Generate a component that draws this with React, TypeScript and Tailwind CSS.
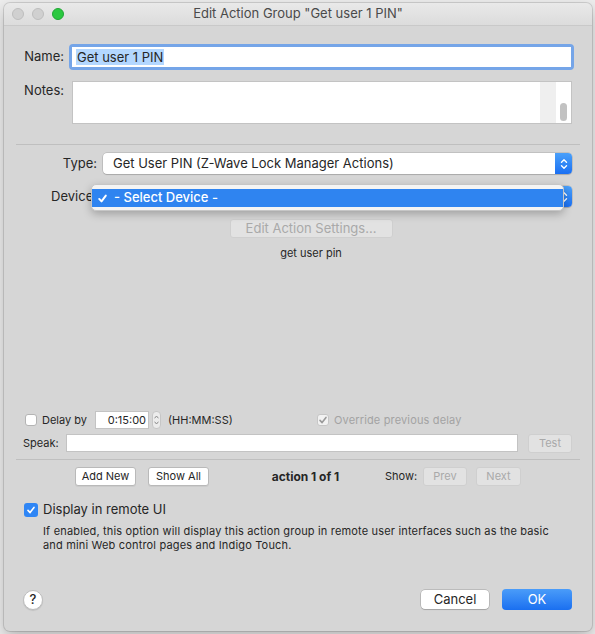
import React from "react";

const font = "font-['Inter','Liberation_Sans',sans-serif]";

function Stepper() {
  // blue up/down arrows on the right side of a popup button
  return (
    <div className="w-[17px] h-full rounded-r-[4px] bg-gradient-to-b from-[#4aa0fa] to-[#1b6ff2] flex items-center justify-center">
      <svg width="8" height="12" viewBox="0 0 8 12" fill="none" stroke="white" strokeWidth="1.4" strokeLinecap="round" strokeLinejoin="round">
        <path d="M1.5 4.2 L4 1.8 L6.5 4.2" />
        <path d="M1.5 7.8 L4 10.2 L6.5 7.8" />
      </svg>
    </div>
  );
}

function Check({ color, size = 10, width = 1.6 }: { color: string; size?: number; width?: number }) {
  return (
    <svg width={size} height={size} viewBox="0 0 10 10" fill="none" stroke={color} strokeWidth={width} strokeLinecap="round" strokeLinejoin="round">
      <path d="M2 5.4 L4.1 7.6 L8 2.4" />
    </svg>
  );
}

function PushButton({ label, w, disabled, size = "text-[11px]" }: { label: string; w: string; disabled?: boolean; size?: string }) {
  return (
    <div
      className={`${w} h-[19px] rounded-[3px] border ${size} flex items-center justify-center ${
        disabled
          ? "bg-[#e2e2e2] border-[#cfcfcf] text-[#a9a9a9]"
          : "bg-white border-[#b9b9b9] text-[#262626] shadow-[0_1px_0_rgba(0,0,0,0.05)]"
      }`}
    >
      {label}
    </div>
  );
}

export default function App() {
  return (
    <div className={`w-[595px] h-[634px] bg-[#eeeeee] overflow-hidden ${font} text-[#262626]`}>
      <div className="ml-[4px] mt-[3px] w-[588px] h-[628px] rounded-[6px] bg-[#d6d6d6] shadow-[0_0_0_1px_rgba(0,0,0,0.12),0_6px_16px_rgba(0,0,0,0.25)] flex flex-col overflow-hidden">
        {/* title bar */}
        <div className="relative h-[23px] shrink-0 bg-gradient-to-b from-[#e9e9e9] to-[#dcdcdc] border-b border-[#c9c9c9] flex items-center">
          <div className="flex items-center gap-[8px] pl-[8px]">
            <div className="w-[12px] h-[12px] rounded-full bg-[#d0d0d0] border border-[#bdbdbd]" />
            <div className="w-[12px] h-[12px] rounded-full bg-[#d0d0d0] border border-[#bdbdbd]" />
            <div className="w-[12px] h-[12px] rounded-full bg-[#2bc840] border border-[#20a634]" />
          </div>
          <div className="flex-1 text-center text-[13px] text-[#4a4a4a] pr-[60px]">Edit Action Group "Get user 1 PIN"</div>
        </div>

        {/* name */}
        <div className="mt-[18px] flex items-center h-[26px]">
          <div className="w-[60px] text-right text-[13px]">Name:</div>
          <div className="ml-[5px] w-[505px] h-[26px] rounded-[4px] bg-[#75a5e8] p-[3px]">
            <div className="w-full h-full bg-white flex items-center pl-[4px] text-[13px]">
              <span className="bg-[#b3d7ff] px-[1px] leading-[16px]">Get user 1 PIN</span>
            </div>
          </div>
        </div>

        {/* notes */}
        <div className="mt-[11px] flex items-start">
          <div className="w-[60px] text-right text-[13px] leading-[16px] pt-[1px]">Notes:</div>
          <div className="ml-[8px] w-[500px] h-[43px] bg-white border border-[#c3c3c3] flex">
            <div className="flex-1" />
            <div className="w-[16px] bg-[#efefef]" />
            <div className="w-[15px] flex items-end justify-center pb-[2px]">
              <div className="w-[7px] h-[18px] rounded-full bg-[#c2c2c2]" />
            </div>
          </div>
        </div>

        <div className="mt-[20px] ml-[12px] w-[564px] h-px bg-[#bfbfbf]" />

        {/* type */}
        <div className="mt-[8px] flex items-center h-[21px]">
          <div className="w-[93px] text-right text-[13px]">Type:</div>
          <div className="ml-[6px] w-[469px] h-[21px] rounded-[4px] bg-white shadow-[0_0_0_0.5px_rgba(0,0,0,0.2),0_1px_1px_rgba(0,0,0,0.12)] flex">
            <div className="flex-1 pl-[10px] text-[13px] flex items-center">Get User PIN (Z-Wave Lock Manager Actions)</div>
            <Stepper />
          </div>
        </div>

        {/* device, with its menu open */}
        <div className="mt-[12px] flex items-center h-[21px]">
          <div className="w-[93px] text-right text-[13px]">Device:</div>
          <div className="relative ml-[6px] w-[469px] h-[21px] rounded-[4px] bg-white shadow-[0_0_0_0.5px_rgba(0,0,0,0.2),0_1px_1px_rgba(0,0,0,0.12)] flex">
            <div className="flex-1" />
            <Stepper />
            <div className="absolute left-[-12px] top-[-2px] w-[473px] h-[27px] rounded-[5px] bg-[#f4f4f4] border border-[#c6c6c6] shadow-[0_3px_8px_rgba(0,0,0,0.25)] pt-[4px]">
              <div className="h-[18px] bg-[#2f84f0] flex items-center text-white text-[13px] font-medium">
                <span className="ml-[5px] w-[17px] flex items-center">
                  <Check color="white" size={11} width={1.8} />
                </span>
                <span>- Select Device -</span>
              </div>
            </div>
          </div>
        </div>

        {/* plugin config area */}
        <div className="mt-[12px] ml-[47px] w-[520px] flex flex-col items-center">
          <PushButton label="Edit Action Settings..." w="w-[163px]" size="text-[13px]" disabled />
          <div className="mt-[8px] text-[11px] leading-[14px]">get user pin</div>
        </div>

        {/* delay */}
        <div className="mt-[151px] flex items-center h-[18px] pl-[21px]">
          <div className="w-[292px] flex items-center">
            <div className="w-[12px] h-[12px] rounded-[3px] bg-white border border-[#b4b4b4]" />
            <span className="ml-[5px] text-[11px]">Delay by</span>
            <div className="ml-[8px] w-[54px] h-[18px] bg-white border border-[#c3c3c3] text-[11px] flex items-center justify-end pr-[2px]">0:15:00</div>
            <div className="ml-[3px] w-[9px] h-[18px] rounded-[4px] bg-[#ececec] border border-[#c6c6c6] flex items-center justify-center">
              <svg width="5" height="12" viewBox="0 0 5 12" fill="none" stroke="#8a8a8a" strokeWidth="1" strokeLinecap="round">
                <path d="M0.8 4 L2.5 2 L4.2 4" />
                <path d="M0.8 8 L2.5 10 L4.2 8" />
              </svg>
            </div>
            <span className="ml-[7px] text-[11px]">(HH:MM:SS)</span>
          </div>
          <div className="w-[12px] h-[12px] rounded-[3px] bg-[#f2f2f2] border border-[#c6c6c6] flex items-center justify-center">
            <Check color="#9a9a9a" />
          </div>
          <span className="ml-[5px] text-[11px] text-[#a3a3a3] tracking-[0.15px]">Override previous delay</span>
        </div>

        {/* speak */}
        <div className="mt-[5px] flex items-center h-[18px] pl-[19px]">
          <div className="w-[43px] text-[11px]">Speak:</div>
          <div className="w-[452px] h-[18px] bg-white border border-[#c3c3c3]" />
          <div className="ml-[10px]">
            <PushButton label="Test" w="w-[44px]" disabled />
          </div>
        </div>

        <div className="mt-[7px] ml-[12px] w-[564px] h-px bg-[#bfbfbf]" />

        {/* action navigation */}
        <div className="mt-[7px] flex items-center h-[19px] pl-[71px]">
          <PushButton label="Add New" w="w-[61px]" />
          <div className="ml-[12px]">
            <PushButton label="Show All" w="w-[61px]" />
          </div>
          <div className="ml-[21px] w-[151px] text-center text-[12px] font-bold">action 1 of 1</div>
          <div className="ml-[4px] w-[38px] text-[11px]">Show:</div>
          <PushButton label="Prev" w="w-[44px]" disabled />
          <div className="ml-[9px]">
            <PushButton label="Next" w="w-[45px]" disabled />
          </div>
        </div>

        {/* remote UI */}
        <div className="mt-[16px] flex items-center h-[16px] pl-[20px]">
          <div className="w-[14px] h-[14px] rounded-[3px] bg-[#2f86f5] flex items-center justify-center">
            <Check color="white" />
          </div>
          <span className="ml-[5px] text-[13px]">Display in remote UI</span>
        </div>
        <div className="mt-[6px] pl-[39px] text-[11px] leading-[14px] tracking-[0.17px]">
          <div>If enabled, this option will display this action group in remote user interfaces such as the basic</div>
          <div>and mini Web control pages and Indigo Touch.</div>
        </div>

        {/* bottom buttons */}
        <div className="mt-[37px] flex items-center h-[21px] pl-[19px]">
          <div className="w-[20px] h-[20px] rounded-full bg-white border border-[#bdbdbd] shadow-[0_1px_1px_rgba(0,0,0,0.1)] flex items-center justify-center text-[13px] font-medium">?</div>
          <div className="ml-[378px] w-[68px] h-[19px] rounded-[4px] bg-white shadow-[0_0_0_0.5px_rgba(0,0,0,0.25),0_1px_1px_rgba(0,0,0,0.12)] flex items-center justify-center text-[13px]">Cancel</div>
          <div className="ml-[13px] w-[70px] h-[21px] rounded-[4px] bg-gradient-to-b from-[#4a9cf9] to-[#1a6ff0] flex items-center justify-center text-[13px] text-white">OK</div>
        </div>
      </div>
    </div>
  );
}
